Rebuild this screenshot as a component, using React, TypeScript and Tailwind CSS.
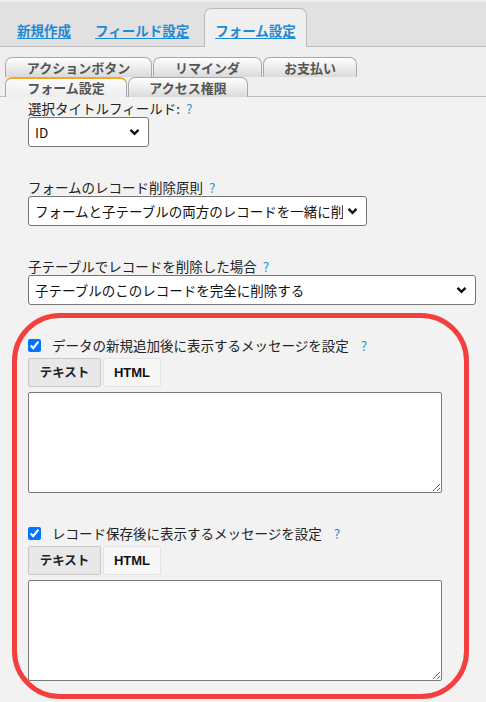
const jp = "font-['Noto_Sans_CJK_JP','Noto_Sans',sans-serif]";

function Chevron() {
  return (
    <svg width="11" height="8" viewBox="0 0 11 8">
      <polyline points="1.5,1.8 5.5,5.8 9.5,1.8" fill="none" stroke="#111" strokeWidth="2.4" />
    </svg>
  );
}

function FakeSelect({ value, width }: { value: string; width: string }) {
  return (
    <div
      className={`${width} h-[30px] border border-[#767676] rounded-[3px] bg-white flex items-center justify-between pl-[6px] pr-[8px] text-[13.5px] text-[#111] overflow-hidden whitespace-nowrap`}
    >
      <span className="overflow-hidden">{value}</span>
      <span className="shrink-0 ml-1">
        <Chevron />
      </span>
    </div>
  );
}

function Help() {
  return <span className="text-[#2b8fd6] ml-[6px]">?</span>;
}

function MessageBlock({ label }: { label: string }) {
  return (
    <div>
      <div className="flex items-center h-[18px]">
        <input type="checkbox" defaultChecked className="w-[13px] h-[13px] accent-[#0075ff]" />
        <span className="ml-[11px] text-[13.5px] leading-[18px] text-[#222]">{label}</span>
        <span className="text-[13.5px] text-[#2b8fd6] ml-[12px]">?</span>
      </div>
      <div className="flex gap-[2px] mt-[4px]">
        <div className="w-[73px] h-[29px] bg-[#e8e8e8] border border-[#c8c8c8] rounded-[2px] flex items-center justify-center text-[12.5px] font-bold text-[#222]">
          テキスト
        </div>
        <div className="w-[58px] h-[29px] bg-[#f7f7f7] border border-[#e3e3e3] rounded-[2px] flex items-center justify-center text-[13px] font-bold text-[#111] font-['Liberation_Sans',sans-serif]">
          HTML
        </div>
      </div>
      <textarea className="block mt-[5px] w-[414px] h-[101px] border border-[#7a7a7a] rounded-[2px] bg-white" />
    </div>
  );
}

export default function App() {
  const subTab =
    "h-[20px] rounded-t-[7px] border border-b-0 border-[#a8a8a8] bg-linear-to-b from-white to-[#dadada] text-[13px] font-bold text-[#555] leading-[19px] text-center";

  return (
    <div className={`relative w-[486px] h-[702px] overflow-hidden bg-[#f2f2f2] ${jp}`}>
      {/* main tabs */}
      <div className="relative flex items-end h-[47px] bg-[#e1e1e1] border-t-2 border-[#ececec] border-b border-b-[#bcbcbc] pl-[17px] text-[13.5px] font-bold">
        <a className="pb-[7px] leading-[18px] text-[#1f8ad2] underline underline-offset-2">新規作成</a>
        <a className="ml-[24px] pb-[7px] leading-[18px] text-[#1f8ad2] underline underline-offset-2">
          フィールド設定
        </a>
        <div className="relative z-10 ml-[15px] -mb-px h-[39px] px-[10px] pb-[8px] flex items-end bg-[#efefef] border border-b-0 border-[#bbbbbb] rounded-t-[7px]">
          <a className="leading-[18px] text-[#1f8ad2] underline underline-offset-2">フォーム設定</a>
        </div>
      </div>

      {/* sub tabs */}
      <div className="h-[50px] bg-[#efefef] pt-[10px] pl-[5px] border-b border-[#bdbdbd]">
        <div className="flex gap-[1px]">
          <div className={`${subTab} w-[147px]`}>アクションボタン</div>
          <div className={`${subTab} w-[109px]`}>リマインダ</div>
          <div className={`${subTab} w-[94px]`}>お支払い</div>
        </div>
        <div className="flex gap-[1px]">
          <div className="w-[122px] h-[20px] rounded-t-[7px] border border-b-0 border-[#a8a8a8] border-t-2 border-t-[#f5a623] bg-linear-to-b from-[#fbfbfb] to-[#ededed] text-[13px] font-bold text-[#555] leading-[17px] text-center">
            フォーム設定
          </div>
          <div className={`${subTab} w-[120px]`}>アクセス権限</div>
        </div>
      </div>

      {/* content */}
      <div className="pl-[28px] pt-[2px] text-[#222]">
        <div className="text-[13.5px] leading-[18px]">
          選択タイトルフィールド:<Help />
        </div>
        <FakeSelect value="ID" width="w-[121px]" />

        <div className="mt-[31px] text-[13.5px] leading-[18px]">
          フォームのレコード削除原則<Help />
        </div>
        <FakeSelect value="フォームと子テーブルの両方のレコードを一緒に削" width="w-[339px]" />

        <div className="mt-[31px] text-[13.5px] leading-[18px]">
          子テーブルでレコードを削除した場合<Help />
        </div>
        <FakeSelect value="子テーブルのこのレコードを完全に削除する" width="w-[448px]" />

        <div className="mt-[31px]">
          <MessageBlock label="データの新規追加後に表示するメッセージを設定" />
        </div>
        <div className="mt-[31px]">
          <MessageBlock label="レコード保存後に表示するメッセージを設定" />
        </div>
      </div>

      {/* highlight frame */}
      <div className="absolute left-[12px] top-[313px] w-[457px] h-[386px] border-[5px] border-[#f43f3f] rounded-[48px] pointer-events-none" />
    </div>
  );
}
